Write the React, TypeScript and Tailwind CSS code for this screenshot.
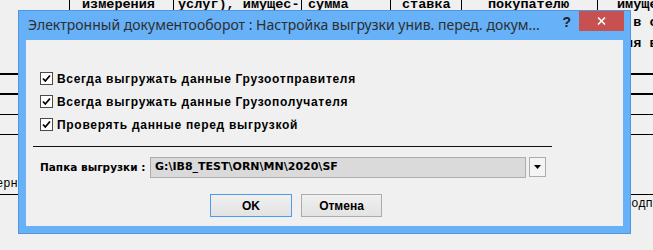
import React from "react";

const headerCells = [
  { w: "w-[69px]", pad: "pl-0", lines: [""], border: false },
  { w: "w-[104px]", pad: "pl-[12px]", lines: ["измерения"], border: true },
  { w: "w-[128px]", pad: "pl-[4px]", lines: ["услуг), имущес-"], border: true },
  { w: "w-[89px]", pad: "pl-[6px]", lines: ["сумма"], border: true },
  { w: "w-[71px]", pad: "pl-[11px]", lines: ["ставка"], border: true },
  { w: "w-[136px]", pad: "pl-[26px]", lines: ["покупателю"], border: true },
  { w: "flex-1", pad: "pl-[19px]", lines: ["имуще-", "а в с", "ния в"], border: true },
];

const options = [
  "Всегда выгружать данные Грузоотправителя",
  "Всегда выгружать данные Грузополучателя",
  "Проверять данные перед выгрузкой",
];

function CheckBox() {
  return (
    <span className="w-[13px] h-[13px] shrink-0 bg-white border border-[#4a4a4a] flex items-center justify-center">
      <svg width="11" height="11" viewBox="0 0 11 11">
        <path d="M2 5.5 L4.3 8 L9 2.5" fill="none" stroke="#000" strokeWidth="1.8" />
      </svg>
    </span>
  );
}

export default function App() {
  return (
    <div className="relative w-[653px] h-[250px] overflow-hidden bg-[#f0f0f0]">
      {/* document behind the dialog */}
      <div className="font-['Liberation_Mono',monospace] text-black">
        <div className="flex h-[60px] font-bold text-[13.5px]">
          {headerCells.map((c, i) => (
            <div key={i} className={`${c.w} ${c.pad} ${c.border ? "border-l border-black" : ""} shrink-0 whitespace-pre`}>
              <div className="leading-[10px]">
                {c.lines.map((l, j) => (
                  <div key={j} className={j === 1 ? "mt-[8px]" : j === 2 ? "mt-[11px]" : ""}>
                    {l}
                  </div>
                ))}
              </div>
            </div>
          ))}
        </div>
        <div className="mt-[13px] h-[2px] bg-black" />
        <div className="mt-[18px] h-[2px] bg-black" />
        <div className="mt-[19px] h-px bg-black" />
        <div className="mt-[19px] h-px bg-black" />
        <div className="h-[59px] flex items-end text-[12px] leading-[12px]">
          <span className="-ml-[4px] mb-[4px]">ерн</span>
        </div>
        <div className="h-px bg-black" />
        <div className="pl-[624px] text-[12px] leading-[12px] mt-[3px] whitespace-nowrap">подпись</div>
      </div>

      {/* dialog window */}
      <div className="absolute left-[18px] top-[10px] w-[613px] h-[224px] bg-[#66b1f8] border border-[#4f96dd] flex flex-col font-['Liberation_Sans',Arial,sans-serif]">
        <div className="h-[29px] flex items-start shrink-0">
          <div className="pl-[9px] pt-[5px] text-[14px] leading-[18px] text-[#2e2e2e] font-['Noto_Sans',sans-serif] whitespace-nowrap">
            Электронный документооборот : Настройка выгрузки унив. перед. докум...
          </div>
          <div className="ml-auto pt-[4px] text-[14px] font-bold leading-[14px] text-[#222] mr-[8px]">?</div>
          <div className="w-[45px] h-[20px] bg-[#c75050] mr-[6px] flex items-center justify-center">
            <svg width="9" height="8" viewBox="0 0 9 8">
              <path d="M1 0.5 L8 7.5 M8 0.5 L1 7.5" stroke="#fff" strokeWidth="1.6" />
            </svg>
          </div>
        </div>
        <div className="mx-[7px] mb-[7px] flex-1 bg-[#f0f0f0] pt-[32px] flex flex-col font-bold text-black">
          <div className="flex flex-col gap-[10px] pl-[14px] text-[12px] tracking-[0.7px]">
            {options.map((o) => (
              <label key={o} className="h-[13px] flex items-center gap-[4px] whitespace-nowrap">
                <CheckBox />
                <span>{o}</span>
              </label>
            ))}
          </div>
          <div className="mt-[15px] ml-[7px] w-[519px] h-px bg-[#111]" />
          <div className="mt-[10px] flex items-start font-['DejaVu_Sans',sans-serif]">
            <div className="w-[124px] pl-[14px] h-[21px] flex items-center text-[10.5px] whitespace-nowrap">Папка выгрузки :</div>
            <div className="w-[376px] h-[21px] bg-[#dadada] border border-[#acacac] flex items-center pl-[4px] text-[11px] whitespace-nowrap">
              G:\IB8_TEST\ORN\MN\2020\SF
            </div>
            <div className="ml-[3px] w-[17px] h-[20px] bg-[#f4f4f4] border border-[#acacac] flex items-center justify-center">
              <svg width="7" height="4" viewBox="0 0 7 4">
                <path d="M0 0 H7 L3.5 4 Z" fill="#000" />
              </svg>
            </div>
          </div>
          <div className="mt-[16px] flex gap-[9px] pl-[184px] text-[12px]">
            <button className="w-[82px] h-[23px] border border-[#4a9deb] bg-gradient-to-b from-[#f0f0f0] to-[#e3e3e3] font-bold">OK</button>
            <button className="w-[81px] h-[23px] border border-[#acacac] bg-gradient-to-b from-[#f0f0f0] to-[#e3e3e3] font-bold">Отмена</button>
          </div>
        </div>
      </div>
    </div>
  );
}
